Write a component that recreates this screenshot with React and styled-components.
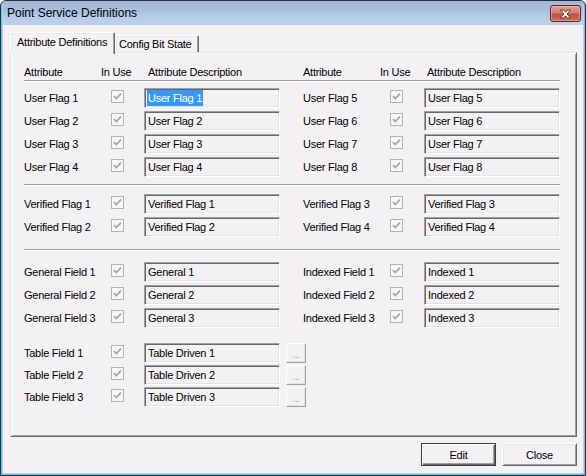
import React from "react";
import styled, { createGlobalStyle } from "styled-components";

const FACE = "#f4f1f5";
const UI_FONT = `"Liberation Sans", Arial, sans-serif`;
const COLS = "87px 33px 136px 23px 87px 34px 136px";

const GlobalStyle = createGlobalStyle`
  html, body { margin: 0; padding: 0; }
  body {
    width: 586px; height: 476px; overflow: hidden; background: #ffffff;
    font-family: ${UI_FONT};
  }
  * { box-sizing: border-box; }
`;

const Window = styled.div`
  width: 586px;
  height: 476px;
  border: 1px solid #26303d;
  border-radius: 6px 6px 0 0;
  background: #b8d0ea;
  box-shadow: inset 0 0 0 1px #5cc6f0;
  padding: 0 2px 2px;
  display: flex;
  flex-direction: column;
  overflow: hidden;
`;

const TitleBar = styled.div`
  height: 24px;
  flex: none;
  display: flex;
  align-items: flex-start;
  padding: 0 2px 0 4px;
  background: linear-gradient(to bottom, #a2bad8 0%, #a7bfdc 40%, #b5cce8 62%, #bbd2ec 100%);
`;

const Title = styled.div`
  font: 12px/24px ${UI_FONT};
  color: #000;
  white-space: nowrap;
`;

const CloseBox = styled.div`
  margin: 4px 0 0 auto;
  width: 31px;
  height: 17px;
  border: 1px solid #5e2421;
  border-radius: 3px;
  background: linear-gradient(to bottom, #e2a196 0%, #d47d70 45%, #c2503f 55%, #cf6a5a 100%);
  box-shadow: inset 0 0 0 1px rgba(255, 210, 200, 0.45);
  display: flex;
  align-items: center;
  justify-content: center;
`;

const Client = styled.div`
  flex: 1;
  background: ${FACE};
  display: flex;
  flex-direction: column;
  padding: 7px 6px 0 7px;
`;

const TabStrip = styled.div`
  height: 20px;
  flex: none;
  display: flex;
  align-items: flex-end;
  position: relative;
  z-index: 1;
`;

const Tab = styled.div`
  font: 11px/14px ${UI_FONT};
  letter-spacing: -0.25px;
  color: #000;
  white-space: nowrap;
  background: ${FACE};
  border-style: solid;
  border-width: 1px 1px 0 1px;
  border-color: #ffffff #696969 transparent #ffffff;
  box-shadow: inset -1px 0 0 #a0a0a0, inset 1px 1px 0 #e9e9e9;
  border-radius: 2px 2px 0 0;
  width: ${(p) => p.$w}px;
  height: ${(p) => (p.$active ? 22 : 17)}px;
  margin-bottom: ${(p) => (p.$active ? -2 : 0)}px;
  padding: ${(p) => (p.$active ? "2px 0 0 6px" : "1px 0 0 3px")};
`;

const Panel = styled.div`
  flex: 1;
  border: 1px solid;
  border-color: #e3e3e3 #696969 #696969 #e3e3e3;
  box-shadow: inset 1px 1px 0 #ffffff, inset -1px -1px 0 #a0a0a0;
  padding: 12px 0 0 13px;
`;

const HeaderRow = styled.div`
  display: grid;
  grid-template-columns: ${COLS};
  height: 14px;
  font: 11px/14px ${UI_FONT};
  letter-spacing: -0.25px;
  color: #000;
`;

const HeadCell = styled.div`
  white-space: nowrap;
  margin-left: ${(p) => p.$shift || 0}px;
`;

const Rule = styled.div`
  width: 536px;
  height: 2px;
  border-top: 1px solid #a0a0a0;
  border-bottom: 1px solid #ffffff;
  margin-top: ${(p) => p.$mt}px;
`;

const Group = styled.div`
  display: grid;
  row-gap: ${(p) => p.$gap}px;
  margin-top: ${(p) => p.$mt}px;
`;

const Row = styled.div`
  display: grid;
  grid-template-columns: ${COLS};
  height: 20px;
  align-items: center;
`;

const Label = styled.div`
  font: 11px/20px ${UI_FONT};
  letter-spacing: -0.25px;
  color: #000;
  white-space: nowrap;
`;

const CheckBox = styled.div`
  width: 13px;
  height: 13px;
  align-self: start;
  margin-top: 2px;
  border: 1px solid #b3b3b3;
  background: #f7f7f7;
  display: flex;
  align-items: center;
  justify-content: center;
`;

const TextBox = styled.div`
  width: 136px;
  height: 20px;
  border: 1px solid;
  border-color: #a0a0a0 #ffffff #ffffff #a0a0a0;
  box-shadow: inset 1px 1px 0 #696969, inset -1px -1px 0 #e3e3e3;
  background: ${FACE};
  padding-left: 3px;
  font: 11px/18px ${UI_FONT};
  letter-spacing: -0.25px;
  color: #000;
  white-space: nowrap;
  overflow: hidden;
`;

const Selected = styled.span`
  display: inline-block;
  background: #3399ff;
  color: #ffffff;
  line-height: 16px;
  margin-left: -1px;
  padding: 0 1px;
  vertical-align: top;
  margin-top: 1px;
`;

const BrowseButton = styled.div`
  width: 20px;
  height: 20px;
  margin-left: 6px;
  justify-self: start;
  border: 1px solid;
  border-color: #ffffff #a0a0a0 #a0a0a0 #ffffff;
  box-shadow: inset -1px -1px 0 #e3e3e3;
  background: ${FACE};
  display: flex;
  align-items: flex-end;
  justify-content: center;
  padding-bottom: 2px;
  font: 10px/10px ${UI_FONT};
  letter-spacing: -0.6px;
  color: #a8a8a8;
`;

const ButtonBar = styled.div`
  height: 36px;
  flex: none;
  display: flex;
  justify-content: flex-end;
  align-items: flex-start;
  gap: 6px;
  padding-top: 6px;
`;

const DialogButton = styled.div`
  width: 75px;
  height: 23px;
  background: ${FACE};
  border: 1px solid;
  border-color: ${(p) => (p.$default ? "#3c3c3c" : "#ffffff #696969 #696969 #ffffff")};
  box-shadow: ${(p) =>
    p.$default
      ? "inset 1px 1px 0 #ffffff, inset -1px -1px 0 #696969, inset -2px -2px 0 #a0a0a0"
      : "inset 1px 1px 0 #e3e3e3, inset -1px -1px 0 #a0a0a0"};
  display: flex;
  align-items: center;
  justify-content: center;
  font: 11px/14px ${UI_FONT};
  letter-spacing: -0.25px;
  color: #000;
`;

const Check = () => (
  <svg width="11" height="11" viewBox="0 0 11 11">
    <path d="M2 5.2 L4.3 7.6 L9 2.6" fill="none" stroke="#a6a6a6" strokeWidth="1.7" />
  </svg>
);

const CloseGlyph = () => (
  <svg width="13" height="10" viewBox="0 0 13 10">
    <path
      d="M1.5 1 L4.5 1 L6.5 3.2 L8.5 1 L11.5 1 L8 5 L11.5 9 L8.5 9 L6.5 6.8 L4.5 9 L1.5 9 L5 5 Z"
      fill="#ffffff"
      stroke="#4a1c18"
      strokeWidth="0.8"
      strokeLinejoin="round"
    />
  </svg>
);

const Field = ({ label, value, selected }) => (
  <>
    <Label>{label}</Label>
    <CheckBox>
      <Check />
    </CheckBox>
    <TextBox>{selected ? <Selected>{value}</Selected> : value}</TextBox>
  </>
);

const PairRow = ({ left, right }) => (
  <Row>
    <Field {...left} />
    <span />
    <Field {...right} />
  </Row>
);

const userRows = [1, 2, 3, 4].map((n) => ({
  left: { label: `User Flag ${n}`, value: `User Flag ${n}`, selected: n === 1 },
  right: { label: `User Flag ${n + 4}`, value: `User Flag ${n + 4}` },
}));

const verifiedRows = [1, 2].map((n) => ({
  left: { label: `Verified Flag ${n}`, value: `Verified Flag ${n}` },
  right: { label: `Verified Flag ${n + 2}`, value: `Verified Flag ${n + 2}` },
}));

const generalRows = [1, 2, 3].map((n) => ({
  left: { label: `General Field ${n}`, value: `General ${n}` },
  right: { label: `Indexed Field ${n}`, value: `Indexed ${n}` },
}));

const tableRows = [1, 2, 3].map((n) => ({
  label: `Table Field ${n}`,
  value: `Table Driven ${n}`,
}));

export default function App() {
  return (
    <>
      <GlobalStyle />
      <Window>
        <TitleBar>
          <Title>Point Service Definitions</Title>
          <CloseBox>
            <CloseGlyph />
          </CloseBox>
        </TitleBar>
        <Client>
          <TabStrip>
            <Tab $active $w={105}>Attribute Definitions</Tab>
            <Tab $w={84}>Config Bit State</Tab>
          </TabStrip>
          <Panel>
            <HeaderRow>
              <HeadCell>Attribute</HeadCell>
              <HeadCell $shift={-10}>In Use</HeadCell>
              <HeadCell $shift={4}>Attribute Description</HeadCell>
              <span />
              <HeadCell>Attribute</HeadCell>
              <HeadCell $shift={-10}>In Use</HeadCell>
              <HeadCell $shift={3}>Attribute Description</HeadCell>
            </HeaderRow>
            <Rule $mt={1} />
            <Group $mt={6} $gap={3}>
              {userRows.map((r, i) => (
                <PairRow key={i} {...r} />
              ))}
            </Group>
            <Rule $mt={7} />
            <Group $mt={8} $gap={3}>
              {verifiedRows.map((r, i) => (
                <PairRow key={i} {...r} />
              ))}
            </Group>
            <Rule $mt={12} />
            <Group $mt={11} $gap={3}>
              {generalRows.map((r, i) => (
                <PairRow key={i} {...r} />
              ))}
            </Group>
            <Group $mt={15} $gap={2}>
              {tableRows.map((r, i) => (
                <Row key={i}>
                  <Field {...r} />
                  <BrowseButton>...</BrowseButton>
                </Row>
              ))}
            </Group>
          </Panel>
          <ButtonBar>
            <DialogButton $default>Edit</DialogButton>
            <DialogButton>Close</DialogButton>
          </ButtonBar>
        </Client>
      </Window>
    </>
  );
}
